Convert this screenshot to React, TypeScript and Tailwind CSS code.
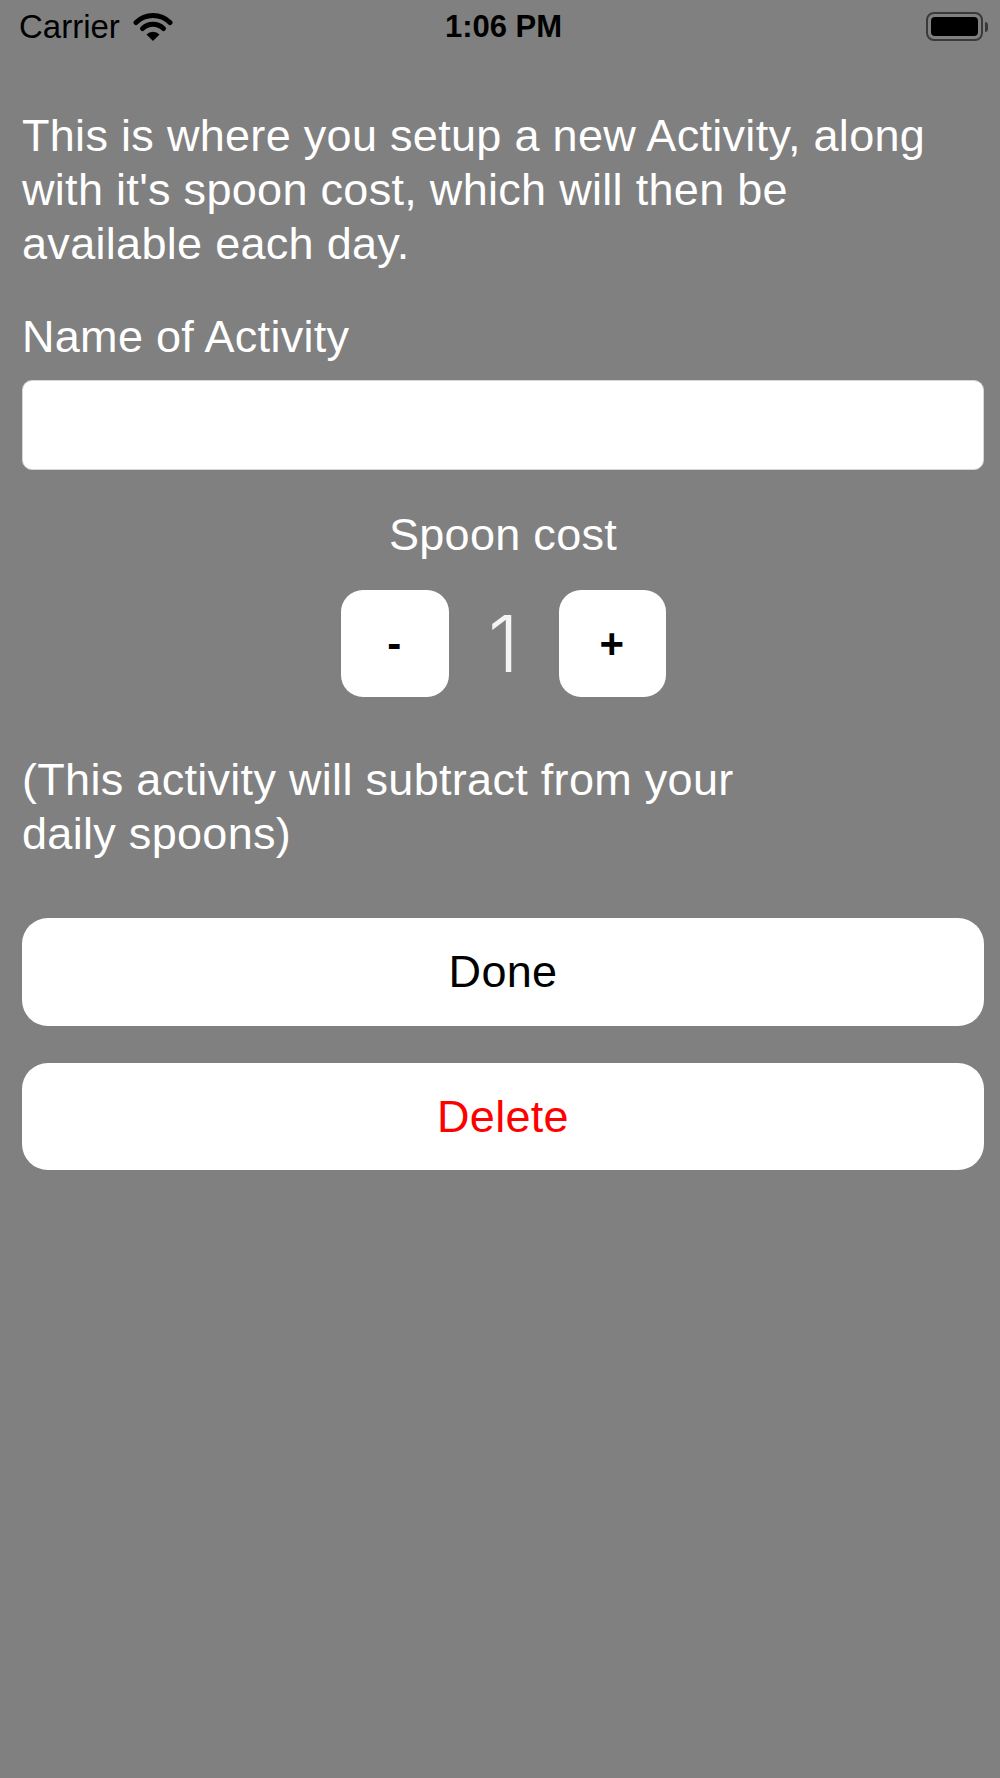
import { useState } from "react";

const WifiIcon = () => (
  <svg width="40" height="30" viewBox="0 0 40 30" fill="none">
    <path d="M3 10.5 A24 24 0 0 1 37 10.5" stroke="#000" strokeWidth="5" strokeLinecap="round" />
    <path d="M9.5 16.5 A15 15 0 0 1 30.5 16.5" stroke="#000" strokeWidth="5" strokeLinecap="round" />
    <path d="M20 29 L13.5 22.5 A9 9 0 0 1 26.5 22.5 Z" fill="#000" />
  </svg>
);

const BatteryIcon = () => (
  <div className="flex items-center gap-[2px]">
    <div className="w-[57px] h-[29px] rounded-[8px] border-[2.5px] border-[#3a3a3a] p-[3px]">
      <div className="w-full h-full rounded-[4px] bg-black" />
    </div>
    <div className="w-[3px] h-[10px] rounded-r-full bg-[#3a3a3a]" />
  </div>
);

const App = () => {
  const [cost, setCost] = useState(1);
  const [name, setName] = useState("");

  return (
    <div className="min-h-[1778px] bg-[#808080] font-['Liberation_Sans',Arial,sans-serif]">
      {/* Status bar */}
      <div className="h-[53px] grid grid-cols-3 items-center pl-[19px] pr-[12px]">
        <div className="flex items-center gap-[13px] text-[33px] text-black">
          <span>Carrier</span>
          <WifiIcon />
        </div>
        <div className="text-center text-[31px] font-bold text-black pt-[2px]">1:06 PM</div>
        <div className="flex justify-end">
          <BatteryIcon />
        </div>
      </div>

      <div className="pl-[22px] pr-[16px] pt-[56px] text-white text-[45px] leading-[54px] tracking-[0.3px]">
        <p>
          This is where you setup a new Activity, along<br />
          with it's spoon cost, which will then be<br />
          available each day.
        </p>

        <p className="mt-[39px]">Name of Activity</p>
        <input
          value={name}
          onChange={(e) => setName(e.target.value)}
          className="mt-[16px] block w-full h-[90px] rounded-[10px] bg-white border border-[#d6d6d6] px-4 text-black text-[45px] outline-none"
        />

        <p className="mt-[38px] text-center">Spoon cost</p>

        <div className="mt-[28px] flex items-center justify-center">
          <button
            onClick={() => setCost(Math.max(0, cost - 1))}
            className="w-[108px] h-[107px] rounded-[22px] bg-white flex items-center justify-center text-black text-[42px] font-bold"
          >
            -
          </button>
          <span className="w-[110px] text-center font-['Inter',sans-serif] font-light text-[78px] leading-[107px] text-[#f4f4f4]">
            {cost}
          </span>
          <button
            onClick={() => setCost(cost + 1)}
            className="w-[107px] h-[107px] rounded-[22px] bg-white flex items-center justify-center text-black text-[42px] font-bold"
          >
            +
          </button>
        </div>

        <p className="mt-[56px]">
          (This activity will subtract from your<br />
          daily spoons)
        </p>

        <button className="mt-[57px] w-full h-[108px] rounded-[26px] bg-white text-black">
          Done
        </button>
        <button className="mt-[37px] w-full h-[107px] rounded-[26px] bg-white text-[#ff0000]">
          Delete
        </button>
      </div>
    </div>
  );
};

export default App;
